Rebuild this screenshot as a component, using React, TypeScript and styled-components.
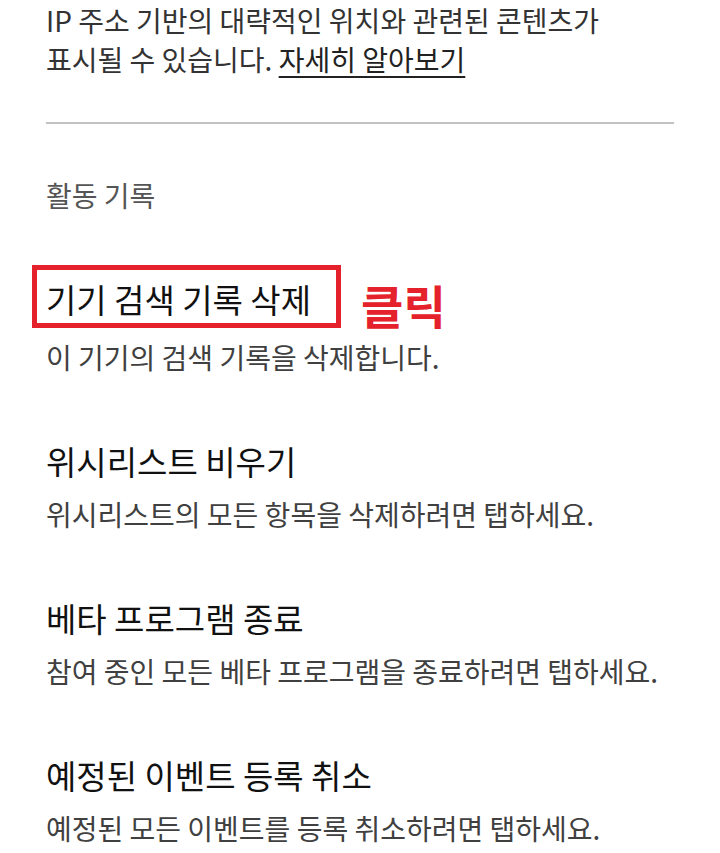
import React from 'react'
import styled, { createGlobalStyle } from 'styled-components'

const GlobalStyle = createGlobalStyle`
  html, body {
    margin: 0;
    padding: 0;
    background: #ffffff;
  }
  body {
    font-family: 'Noto Sans CJK KR', 'Noto Sans', Roboto, sans-serif;
    -webkit-font-smoothing: antialiased;
  }
`

const Page = styled.div`
  width: 720px;
  height: 853px;
  overflow: hidden;
  box-sizing: border-box;
  padding: 1px 46px 0;
`

const Intro = styled.p`
  margin: 0;
  font-size: 28px;
  line-height: 39px;
  color: #333333;
`

const LearnMore = styled.a`
  color: #222222;
  text-decoration: underline;
  text-decoration-thickness: 2px;
  text-underline-offset: 5px;
`

const Divider = styled.hr`
  margin: 43px 0 0;
  border: 0;
  height: 2px;
  background: #c2c2c2;
`

const SectionLabel = styled.div`
  margin-top: 51px;
  font-size: 28px;
  line-height: 40px;
  color: #555555;
`

const List = styled.ul`
  list-style: none;
  margin: 58px 0 0;
  padding: 0;
  display: flex;
  flex-direction: column;
  gap: 65px;
`

const Item = styled.li`
  display: flex;
  flex-direction: column;
  gap: 14px;
`

const TitleRow = styled.div`
  display: flex;
  align-items: center;
  gap: 20px;
`

const Title = styled.div<{ $marked?: boolean }>`
  position: relative;
  font-size: 33px;
  line-height: 42px;
  color: #111111;

  ${({ $marked }) =>
    $marked &&
    `
    &::after {
      content: '';
      position: absolute;
      left: -14px;
      right: -30px;
      top: -13px;
      bottom: -8px;
      border: 5px solid #e5222b;
    }
  `}
`

const ClickTag = styled.span`
  margin: 10px 0 0 30px;
  font-size: 46px;
  font-weight: 700;
  line-height: 42px;
  color: #e5222b;
`

const Desc = styled.div`
  font-size: 28px;
  line-height: 36px;
  color: #404040;
`

const items = [
  { title: '기기 검색 기록 삭제', desc: '이 기기의 검색 기록을 삭제합니다.', marked: true },
  { title: '위시리스트 비우기', desc: '위시리스트의 모든 항목을 삭제하려면 탭하세요.' },
  { title: '베타 프로그램 종료', desc: '참여 중인 모든 베타 프로그램을 종료하려면 탭하세요.' },
  { title: '예정된 이벤트 등록 취소', desc: '예정된 모든 이벤트를 등록 취소하려면 탭하세요.' },
]

export default function App() {
  return (
    <>
      <GlobalStyle />
      <Page>
        <Intro>
          IP 주소 기반의 대략적인 위치와 관련된 콘텐츠가
          <br />
          표시될 수 있습니다. <LearnMore>자세히 알아보기</LearnMore>
        </Intro>
        <Divider />
        <SectionLabel>활동 기록</SectionLabel>
        <List>
          {items.map((item) => (
            <Item key={item.title}>
              <TitleRow>
                <Title $marked={item.marked}>{item.title}</Title>
                {item.marked && <ClickTag>클릭</ClickTag>}
              </TitleRow>
              <Desc>{item.desc}</Desc>
            </Item>
          ))}
        </List>
      </Page>
    </>
  )
}
